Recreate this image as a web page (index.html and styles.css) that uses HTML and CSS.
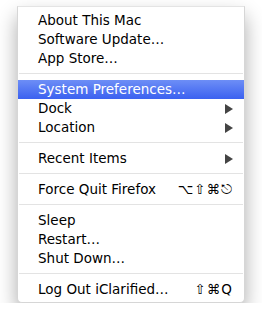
FILE: index.html
```html
<!DOCTYPE html>
<html lang="en">
<head>
    <meta charset="UTF-8">
    <meta name="viewport" content="width=device-width, initial-scale=1.0">
    <title>Apple Menu</title>

    <link rel="stylesheet" href="styles.css">
</head>
<body>
    <div class="menu">
        <div class="item">About This Mac</div>
        <div class="item">Software Update…</div>
        <div class="item">App Store…</div>
        <div class="separator"></div>
        <div class="item selected">System Preferences…</div>
        <div class="item">Dock <span class="arrow"></span></div>
        <div class="item">Location <span class="arrow"></span></div>
        <div class="separator"></div>
        <div class="item">Recent Items <span class="arrow"></span></div>
        <div class="separator"></div>
        <div class="item">Force Quit Firefox <span class="shortcut">⌥⇧⌘⎋</span></div>
        <div class="separator"></div>
        <div class="item">Sleep</div>
        <div class="item">Restart…</div>
        <div class="item">Shut Down…</div>
        <div class="separator"></div>
        <div class="item">Log Out iClarified… <span class="shortcut">⇧⌘Q</span></div>
    </div>
</body>
</html>
```

FILE: styles.css
```css
body {
    margin: 0;
    background-color: white;
    font-family: "DejaVu Sans", Verdana, sans-serif;
    font-size: 13.5px;
    color: black;
}

.menu {
    width: 226px;
    margin: 6px 0 0 17px;
    padding: 4px 0 3px;
    background-color: white;
    border: 1px solid #d6d6d6;
    border-top-color: #e4e4e4;
    border-radius: 0 0 5px 5px;
    box-shadow: 0 10px 20px rgba(0, 0, 0, 0.33);
}

.item {
    height: 19px;
    padding: 0 11px 0 20px;
    display: flex;
    align-items: center;
    justify-content: space-between;
    line-height: 19px;
}

.selected {
    color: white;
    background: linear-gradient(#6d8ef6, #3b61f0);
}

.separator {
    height: 1px;
    margin: 5px 1px 6px;
    background-color: #e3e3e3;
}

.arrow {
    width: 0;
    height: 0;
    border-top: 5px solid transparent;
    border-bottom: 5px solid transparent;
    border-left: 8px solid #444;
}

.shortcut {
    letter-spacing: 1px;
}
```
